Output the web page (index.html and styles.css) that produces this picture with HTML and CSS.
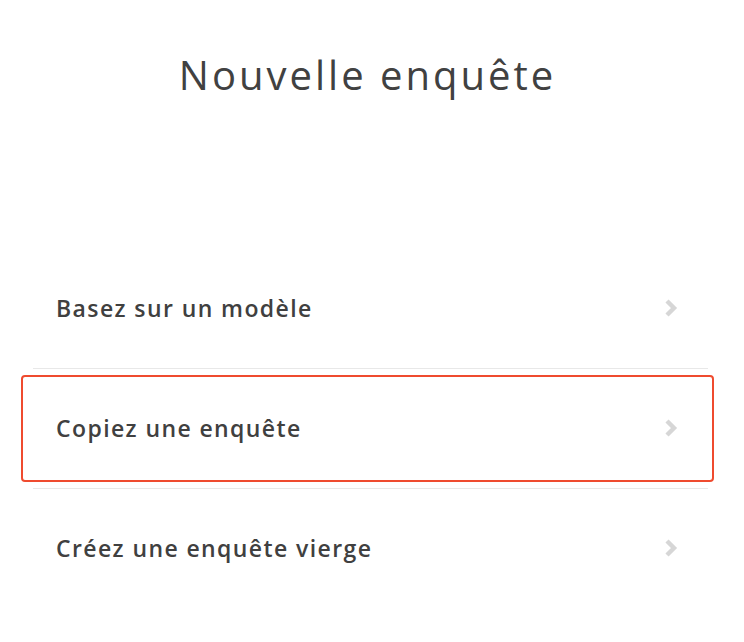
FILE: index.html
```html
<!DOCTYPE html>
<html lang="fr">
<head>
<meta charset="utf-8">
<title>Nouvelle enquête</title>
<link rel="stylesheet" href="styles.css">
</head>
<body>
<main class="page">
  <h1 class="title">Nouvelle enquête</h1>
  <div class="options">
    <a class="option" href="#">
      <span class="label">Basez sur un modèle</span>
      <svg class="chev" width="14" height="20" viewBox="0 0 14 20"><polyline points="3,3 10,10 3,17" fill="none" stroke="#d6d6d6" stroke-width="4.4" stroke-linecap="butt" stroke-linejoin="miter"/></svg>
    </a>
    <div class="divider"></div>
    <a class="option selected" href="#">
      <span class="label">Copiez une enquête</span>
      <svg class="chev" width="14" height="20" viewBox="0 0 14 20"><polyline points="3,3 10,10 3,17" fill="none" stroke="#d6d6d6" stroke-width="4.4" stroke-linecap="butt" stroke-linejoin="miter"/></svg>
    </a>
    <div class="divider"></div>
    <a class="option" href="#">
      <span class="label">Créez une enquête vierge</span>
      <svg class="chev" width="14" height="20" viewBox="0 0 14 20"><polyline points="3,3 10,10 3,17" fill="none" stroke="#d6d6d6" stroke-width="4.4" stroke-linecap="butt" stroke-linejoin="miter"/></svg>
    </a>
  </div>
</main>
</body>
</html>
```
FILE: styles.css
```css
html, body {
  margin: 0;
  padding: 0;
  background: #ffffff;
}
body {
  font-family: "Open Sans", "Liberation Sans", sans-serif;
  color: #404040;
}
.page {
  width: 744px;
  padding: 0 30px 0 21px;
  box-sizing: border-box;
}
.title {
  margin: 55px 0 0;
  font-size: 40px;
  line-height: 40px;
  font-weight: 400;
  letter-spacing: 3px;
  text-align: center;
  color: #414141;
}
.options {
  margin-top: 160px;
  display: flex;
  flex-direction: column;
  gap: 6px;
}
.option {
  height: 107px;
  box-sizing: border-box;
  border: 2px solid transparent;
  border-radius: 4px;
  display: flex;
  align-items: center;
  justify-content: space-between;
  padding: 0 34px 2px 33px;
  text-decoration: none;
  color: #404040;
}
.option.selected {
  border-color: #ef4b2f;
}
.label {
  font-size: 23px;
  font-weight: 600;
  letter-spacing: 1.4px;
}
.chev {
  display: block;
}
.divider {
  height: 1px;
  background: #e8e8e8;
  margin: 0 6px 0 12px;
}
```
